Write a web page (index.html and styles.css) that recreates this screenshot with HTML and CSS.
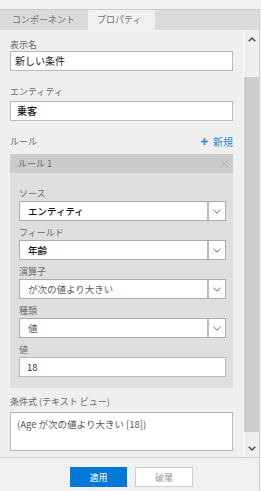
FILE: index.html
```html
<!DOCTYPE html>
<html lang="ja">
<head>
<meta charset="utf-8">
<link rel="stylesheet" href="styles.css">
</head>
<body>
<div class="app">
  <div class="topgap"></div>
  <div class="frame">
    <div class="tabs">
      <div class="tab">コンポーネント</div>
      <div class="tab active">プロパティ</div>
    </div>
    <div class="main">
      <div class="content">
        <div class="lbl l-first">表示名</div>
        <div class="input">新しい条件</div>

        <div class="lbl l-second">エンティティ</div>
        <div class="input in-second">乗客</div>

        <div class="rule-row">
          <span class="lbl">ルール</span>
          <span class="add"><svg width="7" height="7" viewBox="0 0 7 7"><path d="M3.5 0v7M0 3.5h7" stroke="#2b88d8" stroke-width="1.6"/></svg>新規</span>
        </div>

        <div class="rule">
          <div class="rule-head">
            <span>ルール 1</span>
            <svg class="close" width="9" height="9" viewBox="0 0 9 9"><path d="M0.5 0.5l8 8M8.5 0.5l-8 8" stroke="#b0b0b0" stroke-width="1"/></svg>
          </div>
          <div class="rule-body">
            <div class="field">
              <div class="flbl">ソース</div>
              <div class="select"><div class="sel-text bold">エンティティ</div><div class="sel-btn"><svg width="8" height="5" viewBox="0 0 8 5"><path d="M0.5 0.8l3.5 3.4 3.5-3.4" fill="none" stroke="#666" stroke-width="1"/></svg></div></div>
            </div>
            <div class="field">
              <div class="flbl">フィールド</div>
              <div class="select"><div class="sel-text bold">年齢</div><div class="sel-btn"><svg width="8" height="5" viewBox="0 0 8 5"><path d="M0.5 0.8l3.5 3.4 3.5-3.4" fill="none" stroke="#666" stroke-width="1"/></svg></div></div>
            </div>
            <div class="field">
              <div class="flbl">演算子</div>
              <div class="select"><div class="sel-text dim">が次の値より大きい</div><div class="sel-btn"><svg width="8" height="5" viewBox="0 0 8 5"><path d="M0.5 0.8l3.5 3.4 3.5-3.4" fill="none" stroke="#666" stroke-width="1"/></svg></div></div>
            </div>
            <div class="field">
              <div class="flbl">種類</div>
              <div class="select"><div class="sel-text dim">値</div><div class="sel-btn"><svg width="8" height="5" viewBox="0 0 8 5"><path d="M0.5 0.8l3.5 3.4 3.5-3.4" fill="none" stroke="#666" stroke-width="1"/></svg></div></div>
            </div>
            <div class="field">
              <div class="flbl">値</div>
              <div class="input in-val">18</div>
            </div>
          </div>
        </div>

        <div class="lbl l-expr">条件式 (テキスト ビュー)</div>
        <div class="textarea">(Age が次の値より大きい [18])</div>
      </div>
      <div class="scrollbar">
        <div class="sb-up"><svg width="8" height="5" viewBox="0 0 8 5"><path d="M0.7 4.3l3.3-3.3 3.3 3.3" fill="none" stroke="#555" stroke-width="1.6"/></svg></div>
        <div class="sb-track"><div class="sb-thumb"></div></div>
        <div class="sb-down"><svg width="8" height="5" viewBox="0 0 8 5"><path d="M0.7 0.7l3.3 3.3 3.3-3.3" fill="none" stroke="#555" stroke-width="1.6"/></svg></div>
      </div>
    </div>
    <div class="footer">
      <button class="btn primary">適用</button>
      <button class="btn">破棄</button>
    </div>
  </div>
</div>
</body>
</html>
```
FILE: styles.css
```css
* { box-sizing: border-box; }
body {
  margin: 0;
  background: #f0f0f0;
  font-family: "Noto Sans CJK JP", "Noto Sans", "Liberation Sans", sans-serif;
}
.app {
  width: 261px;
  height: 491px;
  display: flex;
  flex-direction: column;
}
.topgap { height: 9px; flex: none; }
.frame {
  flex: 1;
  min-height: 0;
  display: flex;
  flex-direction: column;
  border-right: 1px solid #d2d2d2;
  margin-right: 1px;
}
.tabs {
  flex: none;
  height: 21px;
  background: #dadada;
  border-top: 1px solid #cdcdcd;
  display: flex;
}
.tab {
  width: 88px;
  padding-left: 12px;
  font-size: 9px;
  line-height: 20px;
  color: #707070;
  white-space: nowrap;
}
.tab.active {
  width: 67px;
  padding-left: 9px;
  background: #f0f0f0;
}
.main {
  flex: 1;
  min-height: 0;
  display: flex;
}
.content {
  flex: 1;
  padding: 0 10px;
  overflow: hidden;
  background: #efefef;
}
.lbl {
  display: block;
  font-size: 9px;
  line-height: 13px;
  height: 13px;
  color: #6a6a6a;
  white-space: nowrap;
}
.l-first { margin-top: 8px; }
.l-second { margin-top: 14px; }
.input {
  height: 20px;
  background: #fff;
  border: 1px solid #b8b8b8;
  font-size: 10px;
  line-height: 18px;
  padding-left: 4px;
  color: #222;
  white-space: nowrap;
}
.in-second { margin-top: 3px; padding-left: 6px; font-weight: 500; color: #111; }
.rule-row {
  margin-top: 14px;
  height: 13px;
  display: flex;
  justify-content: space-between;
  align-items: center;
}
.add {
  display: flex;
  align-items: center;
  gap: 5px;
  font-size: 10px;
  line-height: 13px;
  color: #2b88d8;
}
.rule { margin-top: 6px; }
.rule-head {
  height: 19px;
  background: #cbcbcb;
  display: flex;
  align-items: center;
  justify-content: space-between;
  padding: 0 4px 0 8px;
  font-size: 9px;
  color: #6a6a6a;
}
.rule-body {
  background: #dedede;
  padding: 14px 7px 11px 9px;
  display: flex;
  flex-direction: column;
  gap: 5px;
}
.flbl {
  font-size: 9px;
  line-height: 14px;
  height: 14px;
  color: #6a6a6a;
}
.select {
  height: 20px;
  display: flex;
  background: #fff;
  border: 1px solid #ababab;
}
.sel-text {
  flex: 1;
  font-size: 9.5px;
  line-height: 18px;
  padding-left: 8px;
  white-space: nowrap;
}
.sel-text.bold { font-weight: 500; color: #111; }
.sel-text.dim { color: #5a5a5a; }
.sel-btn {
  width: 18px;
  border-left: 2px solid #bcbcbc;
  display: flex;
  align-items: center;
  justify-content: center;
}
.in-val { padding-left: 7px; color: #333; font-size: 9.5px; }
.l-expr { margin-top: 7px; line-height: 14px; height: 14px; }
.textarea {
  margin-top: 3px;
  height: 39px;
  background: #fff;
  border: 1px solid #b8b8b8;
  padding: 4px 0 0 6px;
  font-size: 9.5px;
  line-height: 14px;
  color: #555;
  white-space: nowrap;
}
.scrollbar {
  width: 16px;
  border-left: 1px solid #fafafa;
  display: flex;
  flex-direction: column;
  background: #efefef;
}
.sb-up {
  height: 18px;
  display: flex;
  align-items: center;
  justify-content: center;
}
.sb-track {
  flex: 1;
  padding-top: 29px;
}
.sb-thumb {
  height: 355px;
  background: #cdcdcd;
}
.sb-down {
  height: 17px;
  display: flex;
  align-items: center;
  justify-content: center;
}
.footer {
  flex: none;
  height: 34px;
  border-top: 1px solid #cfcfcf;
  display: flex;
  gap: 8px;
  padding: 9px 0 0 70px;
  background: #f0f0f0;
}
.btn {
  height: 20px;
  width: 58px;
  font-family: inherit;
  font-size: 9px;
  padding: 0;
  border: 1px solid #cdcdcd;
  background: #fff;
  color: #9a9a9a;
}
.btn.primary {
  width: 57px;
  background: #0078d7;
  border-color: #0078d7;
  color: #fff;
}
```
